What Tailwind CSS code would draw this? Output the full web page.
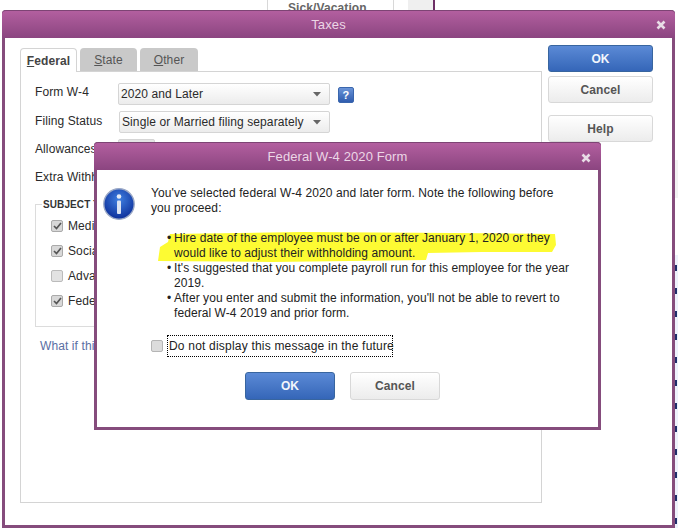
<!DOCTYPE html>
<html lang="en">
<head>
  <meta charset="UTF-8" />
  <title>Taxes</title>
  <script src="https://cdn.jsdelivr.net/npm/@tailwindcss/browser@4"></script>
</head>
<body class="bg-white overflow-hidden font-['Liberation_Sans',Arial,sans-serif] text-[12px] tracking-[0.1px] text-[#2a2a2a]">
<div class="relative w-[678px] h-[528px] overflow-hidden">

  <!-- page behind the windows -->
  <div class="absolute left-[267px] top-0 w-[127px] h-[12px] border-x border-[#d8d8d8] pl-[20px] text-[12px] font-bold text-[#666] leading-[17px]">Sick/Vacation</div>
  <div class="absolute left-[408px] top-0 w-[27px] h-[12px] bg-[#efefef] border-r-2 border-[#6d2f66]"></div>
  <div class="absolute left-[675px] top-[160px] w-[3px] h-[38px] bg-[#f2f2f2]"></div>
  <div class="absolute left-[675px] top-[255px] w-[3px] h-[273px] bg-[#edf1fb] flex flex-col gap-[17px] pt-[10px]">
    <span class="w-[2px] h-[6px] shrink-0 bg-[#1f2f6b]"></span>
    <span class="w-[2px] h-[6px] shrink-0 bg-[#1f2f6b]"></span>
    <span class="w-[2px] h-[6px] shrink-0 bg-[#1f2f6b]"></span>
    <span class="w-[2px] h-[6px] shrink-0 bg-[#1f2f6b]"></span>
    <span class="w-[2px] h-[6px] shrink-0 bg-[#1f2f6b]"></span>
    <span class="w-[2px] h-[6px] shrink-0 bg-[#1f2f6b]"></span>
    <span class="w-[2px] h-[6px] shrink-0 bg-[#1f2f6b]"></span>
    <span class="w-[2px] h-[6px] shrink-0 bg-[#1f2f6b]"></span>
    <span class="w-[2px] h-[6px] shrink-0 bg-[#1f2f6b]"></span>
    <span class="w-[2px] h-[6px] shrink-0 bg-[#1f2f6b]"></span>
    <span class="w-[2px] h-[6px] shrink-0 bg-[#1f2f6b]"></span>
    <span class="w-[2px] h-[6px] shrink-0 bg-[#1f2f6b]"></span>
  </div>

  <!-- Taxes window -->
  <div class="absolute left-[2px] top-[10px] w-[673px] h-[518px] bg-white border-x-[3px] border-b-[3px] border-[#854c7c] rounded-t-[4px] flex flex-col">
    <div class="h-[28px] -mx-[3px] shrink-0 rounded-t-[4px] bg-gradient-to-b from-[#b35f9f] to-[#8b4580] border-t border-[#7d4474] relative flex items-center justify-center pr-[20px] text-[13px] text-[#ecd6e6]">
      Taxes
      <svg class="absolute right-[9px] top-[9px]" width="10" height="10" viewBox="0 0 10 10"><path d="M1.500 1.500 L8.500 8.500 M8.500 1.500 L1.500 8.500" stroke="#e8dce6" stroke-width="2.600"/></svg>
    </div>
    <div class="flex flex-1 pl-[15px] pt-[9px] pb-[22px]">
      <div class="w-[522px] flex flex-col">
        <div class="flex gap-[3px] h-[24px] items-end text-[12px]">
          <div class="w-[57px] h-[24px] bg-white border border-b-0 border-[#d4d4d4] rounded-t-[4px] relative z-10 -mb-px flex items-center justify-center font-bold text-[#444]"><span><u>F</u>ederal</span></div>
          <div class="w-[57px] h-[23px] bg-[#c9c9c9] rounded-t-[4px] flex items-center justify-center text-[#555]"><span><u>S</u>tate</span></div>
          <div class="w-[58px] h-[23px] bg-[#c9c9c9] rounded-t-[4px] flex items-center justify-center text-[#555]"><span><u>O</u>ther</span></div>
        </div>
        <div class="flex-1 border border-[#d4d4d4] pl-[14px] pt-[11px] text-[12px]">
          <div class="flex items-center h-[22px]">
            <div class="w-[83px] -mt-[4px]">Form W-4</div>
            <div class="w-[212px] h-[22px] border border-[#d5d5d5] rounded-[2px] bg-gradient-to-b from-white to-[#ececec] pl-[2px] pr-[8px] flex items-center justify-between">2020 and Later<svg width="8" height="5" viewBox="0 0 8 5"><path d="M0 0H8L4 4.500Z" fill="#666"/></svg></div>
            <div class="ml-[8px] mt-[1px] w-[16px] h-[16px] rounded-[2px] bg-gradient-to-b from-[#6a94d8] to-[#2f5cae] border border-[#3a66ad] text-white font-bold text-[11px] leading-[14px] text-center">?</div>
          </div>
          <div class="flex items-center h-[22px] mt-[6px]">
            <div class="w-[84px] -mt-[3px]">Filing Status</div>
            <div class="w-[211px] h-[22px] border border-[#d5d5d5] rounded-[2px] bg-gradient-to-b from-white to-[#ececec] pl-[2px] pr-[8px] flex items-center justify-between">Single or Married filing separately<svg width="8" height="5" viewBox="0 0 8 5"><path d="M0 0H8L4 4.500Z" fill="#666"/></svg></div>
          </div>
          <div class="flex items-center h-[22px] mt-[6px]">
            <div class="w-[83px] -mt-[3px]">Allowances</div>
            <div class="w-[37px] h-[22px] border border-[#d5d5d5] rounded-[2px] bg-[#e4e4e4]"></div>
          </div>
          <div class="h-[22px] mt-[6px] leading-[20px]">Extra Withholding</div>
          <div class="relative mt-[15px] w-[490px] h-[123px] border border-[#dcdcdc] pl-[15px] pt-[14px]">
            <div class="absolute left-[6px] -top-[7px] bg-white px-[1px] text-[10px] font-bold text-[#333] leading-[13px]">SUBJECT TO</div>
            <div class="flex flex-col gap-[11px]">
              <div class="flex items-center gap-[5px] h-[14px]">
                <span class="w-[12px] h-[12px] rounded-[2px] border border-[#aaa] bg-[#d8d8d8] flex items-center justify-center"><svg width="9" height="8" viewBox="0 0 9 8"><path d="M1 4 L3.500 6.500 L8 1" fill="none" stroke="#555" stroke-width="1.700"/></svg></span>Medicare
              </div>
              <div class="flex items-center gap-[5px] h-[14px]">
                <span class="w-[12px] h-[12px] rounded-[2px] border border-[#aaa] bg-[#d8d8d8] flex items-center justify-center"><svg width="9" height="8" viewBox="0 0 9 8"><path d="M1 4 L3.500 6.500 L8 1" fill="none" stroke="#555" stroke-width="1.700"/></svg></span>Social Security
              </div>
              <div class="flex items-center gap-[5px] h-[14px]">
                <span class="w-[12px] h-[12px] rounded-[2px] border border-[#bbb] bg-[#e2e2e2]"></span>Advance Earned Income
              </div>
              <div class="flex items-center gap-[5px] h-[14px]">
                <span class="w-[12px] h-[12px] rounded-[2px] border border-[#aaa] bg-[#d8d8d8] flex items-center justify-center"><svg width="9" height="8" viewBox="0 0 9 8"><path d="M1 4 L3.500 6.500 L8 1" fill="none" stroke="#555" stroke-width="1.700"/></svg></span>Federal Unemployment
              </div>
            </div>
          </div>
          <div class="ml-[5px] mt-[10px] text-[#5a6ea3]">What if this employee is exempt?</div>
        </div>
      </div>
      <div class="ml-[6px] w-[105px] -mt-[2px] flex flex-col font-bold text-[12px]">
        <div class="h-[27px] rounded-[3px] bg-gradient-to-b from-[#5b8ad6] to-[#3566b8] border border-[#38659f] text-[#f2f6fc] flex items-center justify-center">OK</div>
        <div class="h-[27px] mt-[4px] rounded-[3px] bg-gradient-to-b from-white to-[#ececec] border border-[#d8d8d8] text-[#555] flex items-center justify-center">Cancel</div>
        <div class="h-[27px] mt-[12px] rounded-[3px] bg-gradient-to-b from-white to-[#ececec] border border-[#d8d8d8] text-[#555] flex items-center justify-center">Help</div>
      </div>
    </div>
  </div>

  <!-- Federal W-4 2020 Form dialog -->
  <div class="absolute left-[94px] top-[142px] w-[507px] h-[288px] bg-white border-x-[3px] border-b-[3px] border-[#854c7c] rounded-t-[4px] flex flex-col">
    <div class="h-[28px] -mx-[3px] shrink-0 rounded-t-[4px] bg-gradient-to-b from-[#b35f9f] to-[#8b4580] border-t border-[#7d4474] relative flex items-center justify-center pr-[20px] text-[13px] text-[#ecd6e6]">
      Federal W-4 2020 Form
      <svg class="absolute right-[10px] top-[10px]" width="10" height="10" viewBox="0 0 10 10"><path d="M1.500 1.500 L8.500 8.500 M8.500 1.500 L1.500 8.500" stroke="#e8dce6" stroke-width="2.600"/></svg>
    </div>
    <div class="relative flex-1 flex pl-[6px] pt-[16px]">
      <!-- marker highlight -->
      <svg class="absolute left-[55px] top-[61px]" width="405" height="32" viewBox="0 0 405 32"><path d="M18 3 L150 1 L300 2 L403 3 L404 14 L400 21 L330 21 L276 22 L274 29 L120 31 L6 30 L8 16 L16 11 Z" fill="#fdfb33"/></svg>
      <svg class="shrink-0 mt-[2px]" width="32" height="32" viewBox="0 0 32 32">
        <defs>
          <radialGradient id="infoFill" cx="50%" cy="35%" r="65%"><stop offset="0" stop-color="#3f7fe0"/><stop offset="1" stop-color="#0d2f9a"/></radialGradient>
        </defs>
        <circle cx="16" cy="16" r="15.200" fill="url(#infoFill)" stroke="#9aa8c6" stroke-width="1.400"/>
        <circle cx="16" cy="8.500" r="2.300" fill="#e6ecf7"/>
        <rect x="14" y="12.500" width="4" height="13.500" rx="1" fill="#dbe3f2"/>
      </svg>
      <div class="relative ml-[16px] flex flex-col leading-[15px] text-[#222]">
        <p class="w-[415px]">You've selected federal W-4 2020 and later form. Note the following before you proceed:</p>
        <ul class="mt-[15px] ml-[16px] w-[410px] tracking-[0.07px]">
          <li class="flex"><span class="w-[7px] shrink-0">•</span><span>Hire date of the employee must be on or after January 1, 2020 or they would like to adjust their withholding amount.</span></li>
          <li class="flex"><span class="w-[7px] shrink-0">•</span><span>It's suggested that you complete payroll run for this employee for the year 2019.</span></li>
          <li class="flex"><span class="w-[7px] shrink-0">•</span><span>After you enter and submit the information, you'll not be able to revert to federal W-4 2019 and prior form.</span></li>
        </ul>
        <div class="flex items-center mt-[14px]">
          <span class="w-[12px] h-[12px] rounded-[2px] border border-[#b5b5b5] bg-[#dcdcdc]"></span>
          <span class="ml-[4px] w-[226px] h-[22px] border border-dotted border-black flex items-center pl-px tracking-[0.2px] whitespace-nowrap">Do not display this message in the future</span>
        </div>
        <div class="flex gap-[15px] ml-[94px] mt-[15px] font-bold">
          <div class="w-[90px] h-[28px] rounded-[3px] bg-gradient-to-b from-[#5b8ad6] to-[#3566b8] border border-[#38659f] text-[#f2f6fc] flex items-center justify-center">OK</div>
          <div class="w-[90px] h-[28px] rounded-[3px] bg-gradient-to-b from-white to-[#ececec] border border-[#d8d8d8] text-[#555] flex items-center justify-center">Cancel</div>
        </div>
      </div>
    </div>
  </div>

</div>
</body>
</html>
